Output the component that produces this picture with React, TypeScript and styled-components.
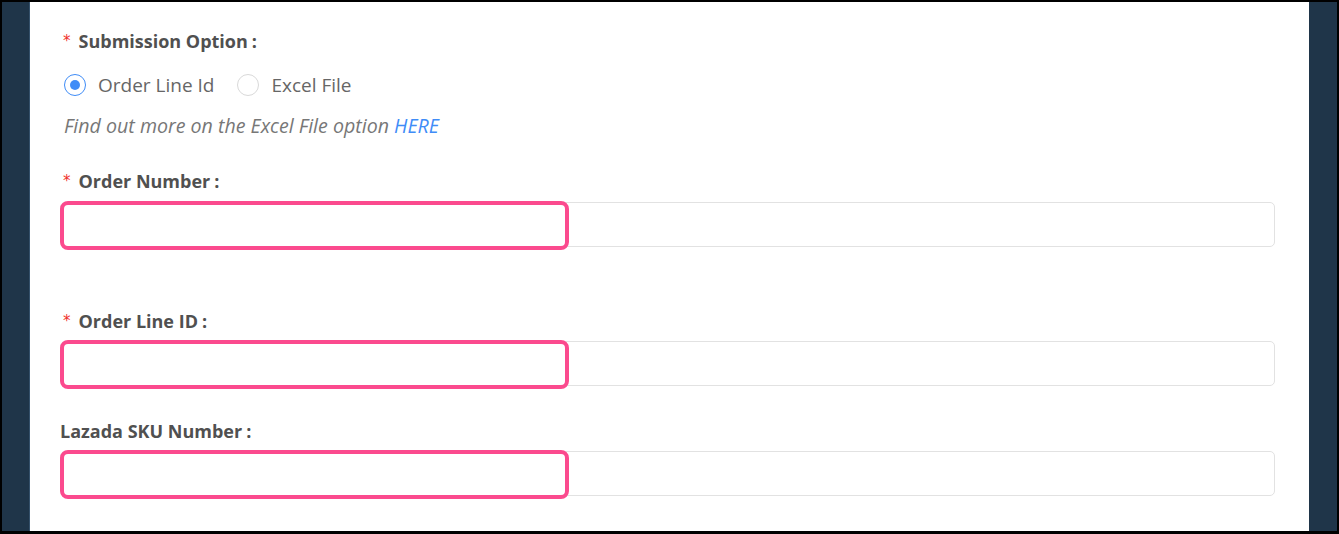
import styled, { createGlobalStyle } from 'styled-components';

const GlobalStyle = createGlobalStyle`
  html, body {
    margin: 0;
    padding: 0;
    background: #000;
  }
  * {
    box-sizing: border-box;
  }
`

const Frame = styled.div`
  width: 1339px;
  height: 534px;
  border: 2px solid #000;
  border-bottom-width: 3px;
  display: grid;
  grid-template-columns: 28px 1fr 28px;
  background-color: #1e3448;
  overflow: hidden;
`

const Side = styled.div<{ $left?: boolean }>`
  background-color: #1f3549;
  border-right: ${p => (p.$left ? '1px solid #34506a' : 'none')};
`

const Content = styled.main`
  background-color: #fff;
  padding: 28px 34px 0 30px;
  font-family: "Open Sans", "Noto Sans", sans-serif;
  color: #555;
`

const Label = styled.div<{ $gap: number }>`
  margin-top: ${p => p.$gap}px;
  font-size: 18px;
  font-weight: 700;
  line-height: 22px;
  color: #505050;
  display: flex;
  align-items: center;
`

const Star = styled.span`
  color: #f0302a;
  font-size: 15px;
  font-weight: 400;
  margin: 0 8px 0 3px;
  font-family: "DejaVu Sans", sans-serif;
`

const Colon = styled.span`
  margin-left: 4px;
`

const RadioRow = styled.div`
  margin-top: 21px;
  padding-left: 4px;
  display: flex;
  align-items: center;
  height: 24px;
`

const RadioItem = styled.label`
  display: flex;
  align-items: center;
  gap: 12px;
  margin-right: 23px;
  font-size: 19px;
  color: #666;
`

const Circle = styled.span<{ $checked?: boolean }>`
  width: 22px;
  height: 22px;
  border-radius: 50%;
  border: 1px solid ${p => (p.$checked ? '#3f8cf7' : '#d9d9d9')};
  display: flex;
  align-items: center;
  justify-content: center;
  &::after {
    content: '';
    width: 10px;
    height: 10px;
    border-radius: 50%;
    background: ${p => (p.$checked ? '#3f8cf7' : 'transparent')};
  }
`

const Hint = styled.p`
  margin: 18px 0 0 4px;
  font-size: 19.6px;
  line-height: 22px;
  font-style: italic;
  color: #777;
`

const Link = styled.a`
  color: #3f8cf7;
  text-decoration: none;
`

const Field = styled.div<{ $gap: number }>`
  position: relative;
  margin-top: ${p => p.$gap}px;
`

const Input = styled.input`
  display: block;
  width: 100%;
  height: 45px;
  border: 1px solid #e2e2e2;
  border-radius: 5px;
  background: #fff;
  outline: none;
`

const Highlight = styled.div`
  position: absolute;
  left: 0;
  top: -1px;
  width: 509px;
  height: 49px;
  border: 4px solid #fb4a8e;
  border-radius: 8px;
  pointer-events: none;
`

const FormField = ({ label, required, gap, inputGap }: { label: string; required?: boolean; gap: number; inputGap: number }) => (
  <>
    <Label $gap={gap}>
      {required && <Star>*</Star>}
      {label}
      <Colon>:</Colon>
    </Label>
    <Field $gap={inputGap}>
      <Input />
      <Highlight />
    </Field>
  </>
)

export default function App() {
  return (
    <>
      <GlobalStyle />
      <Frame>
        <Side $left />
        <Content>
          <Label $gap={0}>
            <Star>*</Star>
            Submission Option
            <Colon>:</Colon>
          </Label>
          <RadioRow>
            <RadioItem>
              <Circle $checked />
              Order Line Id
            </RadioItem>
            <RadioItem>
              <Circle />
              Excel File
            </RadioItem>
          </RadioRow>
          <Hint>
            Find out more on the Excel File option <Link href="#">HERE</Link>
          </Hint>
          <FormField label="Order Number" required gap={33} inputGap={10} />
          <FormField label="Order Line ID" required gap={63} inputGap={9} />
          <FormField label="Lazada SKU Number" gap={34} inputGap={9} />
        </Content>
        <Side />
      </Frame>
    </>
  )
}
